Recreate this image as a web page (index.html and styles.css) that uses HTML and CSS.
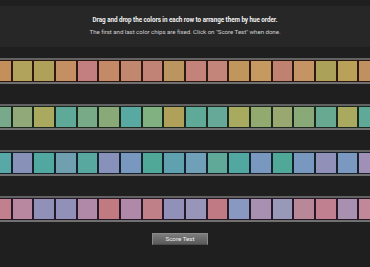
FILE: index.html
```html
<!DOCTYPE html>
<html lang="en">
<head>
    <meta charset="UTF-8">
    <meta name="viewport" content="width=device-width, initial-scale=1.0">
    <title>Hue Test</title>
    <link rel="stylesheet" href="styles.css">
</head>
<body>
    <div class="header">
        <p class="title">Drag and drop the colors in each row to arrange them by hue order.</p>
        <p class="subtitle">The first and last color chips are fixed. Click on "Score Test" when done.</p>
    </div>
    <div class="board" id="board"></div>
    <div class="actions">
        <button class="score-button">Score Test</button>
    </div>

    <script>
        const rows = [
            ['#c3905c', '#b1a35b', '#b0a15a', '#c58f64', '#c37f80', '#c48a68', '#c1876f', '#c08375', '#ba9560',
             '#c4837a', '#c3847a', '#c0965d', '#c59a60', '#c08270', '#c49464', '#aca159', '#b9a159', '#c19060'],
            ['#78a98b', '#91a879', '#a9a95f', '#5fa999', '#78aa88', '#89a978', '#58a9a1', '#81b081', '#b0a15a',
             '#5fa999', '#67a998', '#a8aa60', '#92a970', '#99a870', '#89a978', '#68a991', '#a9a95f', '#5fa999'],
            ['#58a8a8', '#8891b8', '#50a8a0', '#70a0b0', '#58a8a0', '#8891b9', '#7898c0', '#50a898', '#60a1b0',
             '#70a0b8', '#60a898', '#50a8a0', '#7998c0', '#50a898', '#7898c0', '#9090b8', '#7a98c0', '#a090b8'],
            ['#c0808e', '#b888a0', '#9090b8', '#9090b8', '#b088a8', '#c07a80', '#b088a8', '#c08088', '#9090b8',
             '#9896b8', '#c07a84', '#8898c0', '#a890b0', '#9898b8', '#b88898', '#c08090', '#a890b0', '#c08898']
        ];

        const board = document.getElementById('board');

        rows.forEach((colors, index) => {
            const row = document.createElement('div');
            row.className = 'chip-row row-' + (index + 1);
            colors.forEach(color => {
                const chip = document.createElement('div');
                chip.className = 'chip';
                chip.setAttribute('draggable', true);
                chip.style.backgroundColor = color;
                row.appendChild(chip);
            });
            board.appendChild(row);
        });
    </script>
</body>
</html>
```

FILE: styles.css
```css
body {
    font-family: Roboto, "Liberation Sans", Arial, sans-serif;
    background-color: #1f1f1f;
    margin: 0;
    padding: 0;
    width: 370px;
    height: 267px;
    overflow: hidden;
    color: #fff;
}
.header {
    margin-top: 6px;
    height: 41px;
    background-color: #272727;
    text-align: center;
    padding-top: 10px;
    box-sizing: border-box;
}
.header p {
    margin: 0;
}
.title {
    font-size: 6.3px;
    font-weight: bold;
    line-height: 9px;
    letter-spacing: -0.05px;
    color: #f2f2f2;
}
.subtitle {
    margin-top: 3px !important;
    font-size: 6.15px;
    line-height: 9px;
    letter-spacing: -0.05px;
    color: #d0d0d0;
}
.board {
    margin-top: 11px;
    margin-left: -10px;
    width: 390px;
    display: flex;
    flex-direction: column;
    gap: 20px;
}
.chip-row {
    display: flex;
    border-top: 2px solid #626262;
    border-bottom: 2px solid #707070;
}
.chip {
    flex: 1;
    height: 22px;
    box-sizing: border-box;
    border: 1px solid #2e1812;
    cursor: grab;
}
.row-2 .chip {
    border-color: #1c271e;
}
.row-3 .chip {
    border-color: #15222c;
}
.row-4 .chip {
    border-color: #271827;
}
.actions {
    display: flex;
    justify-content: center;
    padding-right: 10px;
    margin-top: 11px;
}
.score-button {
    width: 56px;
    height: 12px;
    padding: 0;
    font-family: inherit;
    font-size: 6.2px;
    color: #f0f0f0;
    background: linear-gradient(#7c7c7c, #5a5a5a);
    border: 1px solid #8a8a8a;
    border-bottom-color: #4a4a4a;
    border-radius: 0;
    cursor: pointer;
}
```
